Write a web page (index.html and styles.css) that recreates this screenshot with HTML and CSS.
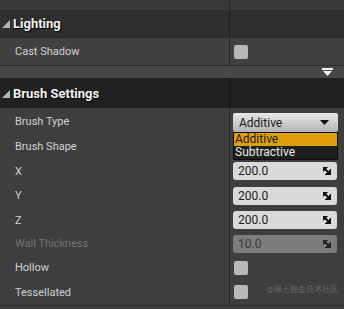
FILE: index.html
```html
<!DOCTYPE html>
<html>
<head>
	<meta charset="UTF-8">
	<meta name="viewport" content="width=device-width, initial-scale=1">
	<title>Details</title>
	<link rel="stylesheet" href="styles.css">
</head>
<body>

<div class="panel">

	<div class="row strip-top">
		<div class="name"></div>
		<div class="divider"></div>
		<div class="value"></div>
	</div>

	<!-- Lighting -->
	<div class="row header lighting">
		<div class="name"><span class="tri"></span>Lighting</div>
		<div class="divider"></div>
		<div class="value"></div>
	</div>

	<div class="row cast">
		<div class="name">Cast Shadow</div>
		<div class="divider"></div>
		<div class="value"><span class="check"></span></div>
	</div>

	<div class="advanced">
		<svg width="11" height="8" viewBox="0 0 11 8"><rect x="0" y="0" width="11" height="2" fill="#f0f0f0"/><polygon points="1,3 10,3 5.5,8" fill="#f0f0f0"/></svg>
	</div>

	<!-- Brush Settings -->
	<div class="row header brush">
		<div class="name"><span class="tri"></span>Brush Settings</div>
		<div class="divider"></div>
		<div class="value"></div>
	</div>

	<div class="rows">
		<div class="row h26">
			<div class="name">Brush Type</div>
			<div class="divider"></div>
			<div class="value">
				<div class="combo">
					<span>Additive</span>
					<svg width="9" height="5" viewBox="0 0 9 5"><polygon points="0,0 9,0 4.5,5" fill="#111"/></svg>
				</div>
				<!-- 開いているドロップダウン -->
				<div class="combo-list">
					<div class="opt sel">Additive</div>
					<div class="opt">Subtractive</div>
				</div>
			</div>
		</div>

		<div class="row h25">
			<div class="name">Brush Shape</div>
			<div class="divider"></div>
			<div class="value"></div>
		</div>

		<div class="row">
			<div class="name">X</div>
			<div class="divider"></div>
			<div class="value"><div class="num"><span>200.0</span><svg class="spin" width="8" height="8" viewBox="0 0 8 8"><polygon points="0,0 4.5,0 0,4.5" /><polygon points="8,8 2,8 8,2" /><line x1="1" y1="1" x2="6" y2="6" stroke-width="2"/></svg></div></div>
		</div>

		<div class="row h25">
			<div class="name">Y</div>
			<div class="divider"></div>
			<div class="value"><div class="num"><span>200.0</span><svg class="spin" width="8" height="8" viewBox="0 0 8 8"><polygon points="0,0 4.5,0 0,4.5" /><polygon points="8,8 2,8 8,2" /><line x1="1" y1="1" x2="6" y2="6" stroke-width="2"/></svg></div></div>
		</div>

		<div class="row">
			<div class="name">Z</div>
			<div class="divider"></div>
			<div class="value"><div class="num"><span>200.0</span><svg class="spin" width="8" height="8" viewBox="0 0 8 8"><polygon points="0,0 4.5,0 0,4.5" /><polygon points="8,8 2,8 8,2" /><line x1="1" y1="1" x2="6" y2="6" stroke-width="2"/></svg></div></div>
		</div>

		<div class="row h23">
			<div class="name disabled">Wall Thickness</div>
			<div class="divider"></div>
			<div class="value"><div class="num off"><span>10.0</span><svg class="spin" width="8" height="8" viewBox="0 0 8 8"><polygon points="0,0 4.5,0 0,4.5" /><polygon points="8,8 2,8 8,2" /><line x1="1" y1="1" x2="6" y2="6" stroke-width="2"/></svg></div></div>
		</div>

		<div class="row h25">
			<div class="name">Hollow</div>
			<div class="divider"></div>
			<div class="value"><span class="check"></span></div>
		</div>

		<div class="row">
			<div class="name">Tessellated</div>
			<div class="divider"></div>
			<div class="value"><span class="check"></span></div>
		</div>
	</div>

	<div class="bottom-line"></div>

	<div class="watermark">@稀土掘金技术社区</div>
</div>

</body>
</html>
```

FILE: styles.css
```css
html, body {
	margin: 0;
	height: 100%;
	overflow: hidden;
}

body {
	background-color: #3e3e3e;
	font-family: Roboto, "Noto Sans", "Noto Sans CJK SC", sans-serif;
	font-size: 11px;
	color: #d2d2d2;
}

.panel {
	position: relative;
	height: 309px;
}

/* 行の基本 */
.row {
	display: flex;
	height: 24px;
}

.row .name {
	width: 229px;
	padding-left: 15px;
	box-sizing: border-box;
	display: flex;
	align-items: center;
}

.row .divider {
	width: 1px;
	background-color: #262626;
}

.row .value {
	flex: 1;
	position: relative;
	display: flex;
	align-items: center;
	padding-left: 3px;
}

.h26 { height: 26px; }
.h25 { height: 25px; }
.h23 { height: 23px; }

.strip-top {
	height: 10px;
	background-color: #393939;
}

/* ヘッダー */
.header {
	height: 27px;
	color: #f2f2f2;
	font-size: 13px;
	font-weight: bold;
	text-shadow: 1px 1px 1px #000;
}

.header .name {
	padding-left: 2px;
}

.lighting {
	background-color: #2f2f2f;
	border-bottom: 1px solid #2a2a2a;
}

.brush {
	background-color: #212121;
	height: 30px;
}

.brush .divider {
	background-color: #181818;
}

.lighting .divider {
	background-color: #222;
}

.tri {
	width: 0;
	height: 0;
	border-left: 8px solid transparent;
	border-bottom: 8px solid #b4b4b4;
	margin-right: 3px;
	margin-top: 1px;
}

.cast {
	height: 27px;
	background-color: #414141;
	border-bottom: 1px solid #2c2c2c;
}

.advanced {
	height: 12px;
	background-color: #474747;
	display: flex;
	justify-content: flex-end;
	align-items: center;
	padding-right: 11px;
}

.check {
	width: 14px;
	height: 14px;
	border-radius: 2px;
	background-color: #b8b8b8;
	margin-left: 1px;
}

.disabled {
	color: #727272;
}

/* ドロップダウン */
.combo {
	width: 105px;
	height: 19px;
	box-sizing: border-box;
	border-radius: 2px;
	background: linear-gradient(#e8e8e8, #b4b4b4);
	color: #1a1a1a;
	font-size: 12px;
	display: flex;
	align-items: center;
	justify-content: space-between;
	padding: 0 9px 0 6px;
	margin-top: 3px;
}

.combo-list {
	position: absolute;
	left: 3px;
	top: 24px;
	width: 105px;
	box-sizing: border-box;
	border: 1px solid #0c0c0c;
	background-color: #1e1e1e;
	z-index: 10;
}

.opt {
	height: 13px;
	line-height: 13px;
	font-size: 12px;
	color: #e8e8e8;
	padding-left: 1px;
}

.opt.sel {
	background-color: #e0a00e;
	color: #1c1c1c;
}

/* 数値入力 */
.num {
	width: 104px;
	height: 18px;
	box-sizing: border-box;
	border-radius: 3px;
	background-color: #dadada;
	color: #1a1a1a;
	font-size: 12px;
	display: flex;
	align-items: center;
	justify-content: space-between;
	padding: 0 6px 0 5px;
}

.num.off {
	background-color: #7c7c7c;
	color: #3a3a3a;
}

.spin {
	fill: #111;
	stroke: #111;
}

.num.off .spin {
	fill: #222;
	stroke: #222;
}

.bottom-line {
	height: 1px;
	background-color: #2e2e2e;
	margin-top: 1px;
}

.watermark {
	position: absolute;
	right: 6px;
	bottom: 15px;
	font-size: 8px;
	color: #666;
}
```
